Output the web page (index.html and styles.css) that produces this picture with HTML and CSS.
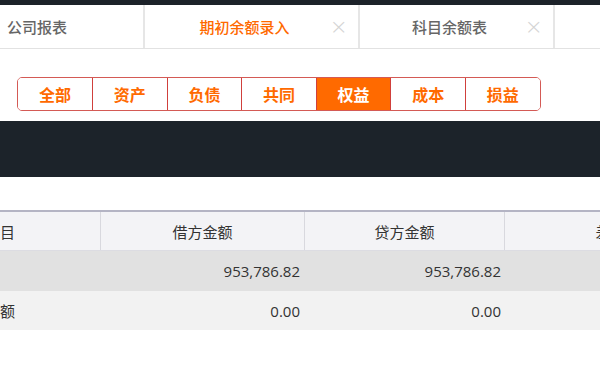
FILE: index.html
```html
<!DOCTYPE html>
<html lang="zh">
<head>
<meta charset="utf-8">
<link rel="stylesheet" href="styles.css">
</head>
<body>
<div class="topbar"></div>
<div class="tabs">
  <div class="tab tab-first"><span class="tab-label">公司报表</span></div>
  <div class="tab tab-active tab-mid"><span class="tab-label">期初余额录入</span><span class="tab-close">×</span></div>
  <div class="tab tab-third"><span class="tab-label">科目余额表</span><span class="tab-close">×</span></div>
</div>
<div class="filter">
  <div class="btn-group">
    <div class="btn">全部</div>
    <div class="btn">资产</div>
    <div class="btn">负债</div>
    <div class="btn">共同</div>
    <div class="btn btn-on">权益</div>
    <div class="btn">成本</div>
    <div class="btn">损益</div>
  </div>
</div>
<div class="darkband"></div>
<div class="spacer"></div>
<div class="grid">
  <div class="row head">
    <div class="cell c1">项目</div>
    <div class="cell c2">借方金额</div>
    <div class="cell c3">贷方金额</div>
    <div class="cell c4">差额</div>
  </div>
  <div class="row r1">
    <div class="cell c1"></div>
    <div class="cell c2 num">953,786.82</div>
    <div class="cell c3 num">953,786.82</div>
    <div class="cell c4"></div>
  </div>
  <div class="row r2">
    <div class="cell c1 lbl">余额</div>
    <div class="cell c2 num">0.00</div>
    <div class="cell c3 num">0.00</div>
    <div class="cell c4"></div>
  </div>
</div>
</body>
</html>
```
FILE: styles.css
```css
html, body {
  margin: 0;
  padding: 0;
  background: #fff;
  overflow: hidden;
  width: 600px;
  height: 366px;
}
body {
  font-family: "Open Sans", "Noto Sans CJK SC", sans-serif;
  color: #333;
}
.topbar {
  height: 5px;
  background: #1c2229;
}
.tabs {
  display: flex;
  height: 43px;
  border-bottom: 1px solid #e2e2e2;
  white-space: nowrap;
}
.tab {
  position: relative;
  display: flex;
  align-items: center;
  border-right: 2px solid #e6e6e6;
  font-size: 15px;
  font-weight: 500;
  color: #666;
  font-family: "Noto Sans CJK SC", sans-serif;
}
.tab-first {
  width: 136px;
  padding-left: 7px;
}
.tab-mid {
  justify-content: center;
  padding-right: 14px;
  box-sizing: border-box;
  width: 215px;
}
.tab-third {
  width: 195px;
  justify-content: center;
  padding-right: 14px;
  box-sizing: border-box;
}
.tab-active { color: #ff6a00; }
.tab-close {
  position: absolute;
  right: 10px;
  top: 9px;
  font-size: 22px;
  font-weight: 300;
  color: #d4d4d4;
  font-family: "DejaVu Sans", sans-serif;
}
.filter {
  padding: 28px 0 0 17px;
  height: 72px;
  box-sizing: border-box;
}
.btn-group {
  display: inline-flex;
  border: 1px solid #d45a55;
  border-radius: 5px;
  overflow: hidden;
  height: 34px;
  box-sizing: border-box;
}
.btn {
  width: 73.6px;
  display: flex;
  align-items: center;
  justify-content: center;
  border-left: 1px solid #d0403c;
  font-family: "Noto Sans CJK SC", sans-serif;
  font-size: 16px;
  font-weight: 700;
  color: #ff6a00;
  background: #fff;
}
.btn:first-child { border-left: none; width: 74px; }
.btn-on {
  background: #ff6a00;
  color: #fff;
}
.darkband {
  height: 56px;
  background: #1c232a;
}
.spacer { height: 33px; }
.grid {
  width: 740px;
  margin-left: -23px;
}
.row {
  display: flex;
}
.cell {
  display: flex;
  align-items: center;
  box-sizing: border-box;
  font-size: 15px;
  color: #333;
  white-space: nowrap;
}
.c1 { width: 124px; padding-left: 8px; }
.c2 { width: 204px; }
.c3 { width: 200px; }
.c4 { width: 212px; }
.head {
  height: 38px;
  border-top: 2px solid #b4b4c4;
  border-bottom: 1px solid #dcdce2;
  background: #f3f3f6;
}
.head .cell {
  justify-content: center;
  font-family: "Noto Sans CJK SC", sans-serif;
  border-right: 1px solid #d8d8de;
  color: #333;
}
.head .c1 { justify-content: flex-start; padding-left: 8px; }
.r1 {
  height: 40px;
  background: #e1e1e1;
}
.r2 {
  height: 39px;
  background: #f2f2f2;
}
.num {
  justify-content: flex-end;
  padding-right: 5px;
}
.c3.num { padding-right: 4px; }
.lbl {
  font-family: "Noto Sans CJK SC", sans-serif;
  padding-left: 8px;
}
```
